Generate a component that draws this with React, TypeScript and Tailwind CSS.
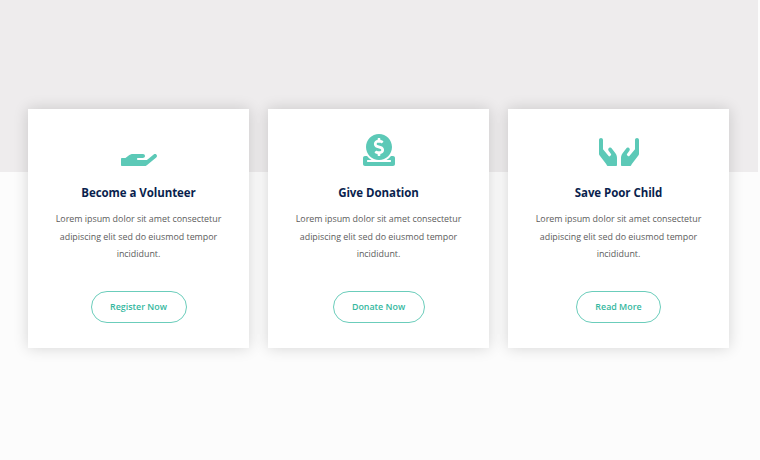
import { FaDonate, FaHandHolding, FaHands } from 'react-icons/fa';

const cards = [
  { icon: <FaHandHolding className="h-8 w-9" />, title: 'Become a Volunteer', action: 'Register Now', width: 'w-[96px]' },
  { icon: <FaDonate className="h-8 w-8" />, title: 'Give Donation', action: 'Donate Now', width: 'w-[92px]' },
  { icon: <FaHands className="h-8 w-10" />, title: 'Save Poor Child', action: 'Read More', width: 'w-[85px]' },
];

export default function App() {
  return (
    <main className="h-[460px] w-[760px] overflow-hidden bg-[#fcfcfc] font-['Open_Sans',sans-serif]">
      <div className="mr-0.5 h-[172px] bg-[#eeeced]" />
      <section className="-mt-[63px] ml-7 flex gap-[19px]">
        {cards.map((card) => (
          <article
            key={card.title}
            className="flex h-[239px] w-[221px] flex-col items-center bg-white pt-[25px] text-center shadow-[0_0_14px_rgba(0,0,0,0.16)]"
          >
            <div className="text-[#5cc9b7]">{card.icon}</div>
            <h3 className="mt-[18px] text-[11.5px] leading-[18px] font-bold tracking-[-0.06px] text-[#0a1f4e]">{card.title}</h3>
            <p className="mt-[8px] w-[180px] text-[8.9px] leading-[17.7px] text-[#5c5c5c]">
              Lorem ipsum dolor sit amet consectetur adipiscing elit sed do eiusmod tempor incididunt.
            </p>
            <button
              className={`mt-[28px] h-8 rounded-full border border-[#6bcdbb] text-[8.9px] leading-[14px] font-semibold text-[#35b8a0] ${card.width}`}
            >
              {card.action}
            </button>
          </article>
        ))}
      </section>
    </main>
  );
}
